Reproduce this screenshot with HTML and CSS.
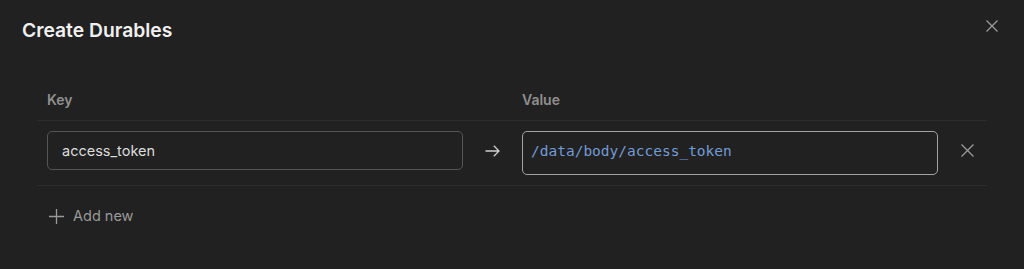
FILE: index.html
```html
<!DOCTYPE html>
<html lang="en">
<head>
<meta charset="utf-8">
<title>Create Durables</title>
<link rel="stylesheet" href="styles.css">
</head>
<body>
<div class="modal">
  <div class="modal-header">
    <h1 class="modal-title">Create Durables</h1>
    <button class="icon-btn close-btn" aria-label="Close">
      <svg width="12" height="12" viewBox="0 0 12 12"><path d="M0.5 0.5L11.5 11.5M11.5 0.5L0.5 11.5" stroke="currentColor" stroke-width="1.3" fill="none"/></svg>
    </button>
  </div>
  <div class="table">
    <div class="table-head">
      <div class="col-key">Key</div>
      <div class="col-arrow"></div>
      <div class="col-value">Value</div>
    </div>
    <div class="table-row">
      <div class="col-key">
        <div class="text-input">access_token</div>
      </div>
      <div class="col-arrow">
        <svg width="15" height="12" viewBox="0 0 15 12"><path d="M0.5 6H14M8.8 0.8L14 6L8.8 11.2" stroke="currentColor" stroke-width="1.3" fill="none"/></svg>
      </div>
      <div class="col-value">
        <div class="code-input">/data/body/access_token</div>
      </div>
      <div class="col-action">
        <button class="icon-btn delete-btn" aria-label="Remove">
          <svg width="13" height="13" viewBox="0 0 13 13"><path d="M0.5 0.5L12.5 12.5M12.5 0.5L0.5 12.5" stroke="currentColor" stroke-width="1.3" fill="none"/></svg>
        </button>
      </div>
    </div>
    <button class="add-btn">
      <svg width="15" height="15" viewBox="0 0 15 15"><path d="M7.5 0V15M0 7.5H15" stroke="currentColor" stroke-width="1.3" fill="none"/></svg>
      <span>Add new</span>
    </button>
  </div>
</div>
</body>
</html>
```

FILE: styles.css
```css
* { box-sizing: border-box; }
html, body {
  margin: 0;
  background: #212121;
  font-family: Inter, "Noto Sans", sans-serif;
  color: #e6e6e6;
}
.modal {
  width: 1024px;
  height: 269px;
  background: #212121;
}
.modal-header {
  display: flex;
  justify-content: space-between;
  align-items: flex-start;
  padding: 18px 26px 0 22px;
}
.modal-title {
  margin: 0;
  font-size: 19.3px;
  line-height: 24px;
  font-weight: 600;
  color: #f0f0f0;
}
.icon-btn {
  background: none;
  border: 0;
  padding: 0;
  display: flex;
  color: #9a9a9a;
  cursor: pointer;
}
.close-btn {
  margin-top: 2px;
}
.table {
  margin: 38px 0 0 37px;
  width: 950px;
}
.table-head, .table-row {
  display: flex;
  border-bottom: 1px solid #2d2d2d;
}
.table-head {
  padding: 10px 10px;
  font-size: 14px;
  line-height: 20px;
  font-weight: 600;
  color: #8f8f8f;
}
.table-row {
  padding: 10px 10px;
  align-items: flex-start;
}
.col-key { width: 416px; }
.col-arrow {
  width: 59px;
  display: flex;
  align-items: center;
  justify-content: center;
  color: #cfcfcf;
}
.table-row .col-arrow { height: 39px; }
.col-value { width: 416px; }
.col-action {
  height: 39px;
  display: flex;
  align-items: center;
  padding-left: 23px;
}
.text-input {
  height: 39px;
  border: 1px solid #555555;
  border-radius: 5px;
  padding: 0 14px;
  display: flex;
  align-items: center;
  font-size: 14.5px;
  color: #dcdcdc;
}
.code-input {
  height: 44px;
  border: 1px solid #a3a3a3;
  border-radius: 5px;
  padding: 9px 8px 0;
  font-family: "DejaVu Sans Mono", "Liberation Mono", monospace;
  font-size: 14.5px;
  line-height: 20px;
  color: #729bd6;
}
.add-btn {
  display: flex;
  align-items: center;
  gap: 9px;
  margin-top: 20px;
  padding: 0 0 0 12px;
  background: none;
  border: 0;
  font-family: Inter, "Noto Sans", sans-serif;
  font-size: 14.5px;
  line-height: 20px;
  color: #9a9a9a;
  cursor: pointer;
}
```
